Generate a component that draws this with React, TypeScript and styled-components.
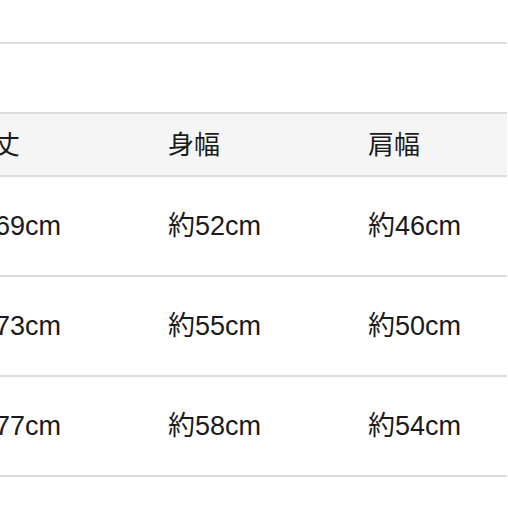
import React from "react";
import styled, { createGlobalStyle } from "styled-components";

const Global = createGlobalStyle`
  html, body { margin: 0; padding: 0; background: #fff; }
  body { font-family: "Liberation Sans", "Noto Sans CJK JP", sans-serif; color: #1a1a1a; }
`;

const Page = styled.div`
  width: 508px;
  height: 508px;
  overflow: hidden;
  background: #fff;
`;

const TopRule = styled.div`
  margin-top: 42px;
  margin-right: 1px;
  border-top: 2px solid #dcdcdc;
  height: 68px;
`;

const Table = styled.table`
  margin-left: -40px;
  width: 547px;
  border-collapse: collapse;
  table-layout: fixed;
`;

const HeadRow = styled.tr`
  background: #f5f5f5;
  border-top: 2px solid #dcdcdc;
  border-bottom: 2px solid #dcdcdc;
  height: 63px;
`;

const Row = styled.tr`
  border-bottom: 2px solid #dcdcdc;
  height: 100px;
`;

const Th = styled.th<{ $w?: number }>`
  box-sizing: border-box;
  width: ${(p) => (p.$w ? `${p.$w}px` : "auto")};
  padding: 0 0 0 8px;
  text-align: left;
  font-weight: 400;
  font-size: 26px;
  line-height: 1;
  white-space: nowrap;
`;

const Td = styled.td`
  box-sizing: border-box;
  padding: 0 0 0 8px;
  font-size: 27px;
  line-height: 1;
  white-space: nowrap;
`;

const headers = ["着丈", "身幅", "肩幅"];
const rows = [
  ["約69cm", "約52cm", "約46cm"],
  ["約73cm", "約55cm", "約50cm"],
  ["約77cm", "約58cm", "約54cm"],
];

export default function App() {
  return (
    <Page>
      <Global />
      <TopRule />
      <Table>
        <thead>
          <HeadRow>
            {headers.map((h, i) => (
              <Th key={h} $w={i < 2 ? 200 : undefined}>
                {h}
              </Th>
            ))}
          </HeadRow>
        </thead>
        <tbody>
          {rows.map((r) => (
            <Row key={r[0]}>
              {r.map((c) => (
                <Td key={c}>{c}</Td>
              ))}
            </Row>
          ))}
        </tbody>
      </Table>
    </Page>
  );
}
